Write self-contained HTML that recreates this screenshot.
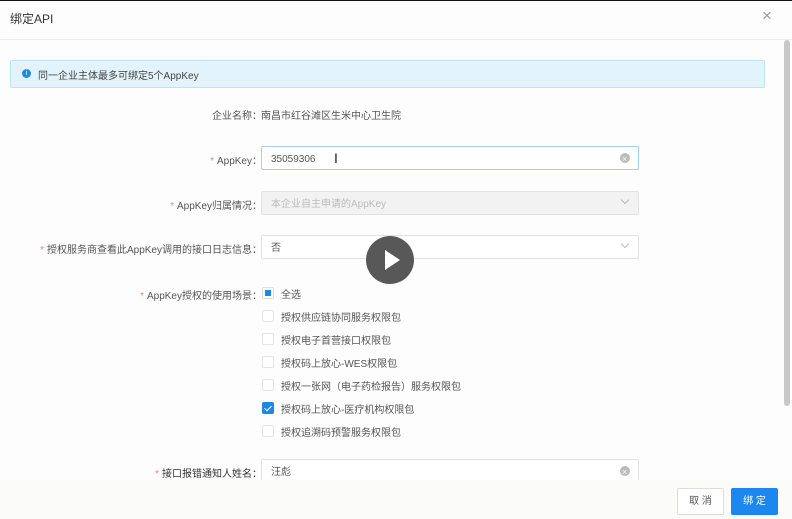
<!DOCTYPE html>
<html><head><meta charset="utf-8"><style>
*{box-sizing:border-box;margin:0;padding:0}
body{width:792px;height:519px;overflow:hidden;background:#fdfdfd;font-family:"Liberation Sans","Noto Sans CJK SC",sans-serif;color:#555;font-size:10px;position:relative}
.abs{position:absolute}
.lbl{position:absolute;right:530px;font-size:10px;color:#555;text-align:right;white-space:nowrap}
.lbl b{color:#f07c7c;font-weight:normal;margin-right:3px}
.inp{position:absolute;left:261px;width:378px;height:24px;border:1px solid #e2e2e2;border-radius:2px;background:#fff;padding-left:9px;line-height:25px;font-size:10px;color:#555}
.cb{position:absolute;left:262px;width:12px;height:12px;border:1px solid #e4e4e4;border-radius:2px;background:#fff}
.ct{position:absolute;left:281px;font-size:10px;color:#555}
.clr{position:absolute;right:8px;top:6px;width:10px;height:10px;border-radius:50%;background:#bbb}
.clr:after{content:"×";position:absolute;left:2px;top:-6px;color:#fff;font-size:9px}
.arr{position:absolute;right:10px;top:5px;width:6px;height:6px;border-right:1px solid #bbb;border-bottom:1px solid #bbb;transform:rotate(45deg)}
</style></head><body>
<div class="abs" style="left:0;top:0;width:792px;height:1px;background:#111"></div>
<div class="abs" style="left:10px;top:10px;font-size:12px;color:#333">绑定API</div>
<div class="abs" style="left:762px;top:6px;font-size:17px;color:#999;font-weight:200">×</div>
<div class="abs" style="left:0;top:39px;width:792px;height:1px;background:#eee"></div>
<div class="abs" style="left:784px;top:40px;width:6px;height:366px;background:#c8c8c8;border-radius:3px"></div>
<div class="abs" style="left:10px;top:60px;width:755px;height:28px;background:#e3f3fb;border:1px solid #bfe3f5;border-radius:2px"></div>
<div class="abs" style="left:22px;top:69px;width:9px;height:9px;border-radius:50%;background:#1d8ce0;color:#fff;font-size:7px;text-align:center;line-height:9px">i</div>
<div class="abs" style="left:38px;top:67px;font-size:10px;color:#444">同一企业主体最多可绑定5个AppKey</div>
<div class="lbl" style="top:107px">企业名称：</div>
<div class="abs" style="left:261px;top:107px;font-size:10px;color:#555">南昌市红谷滩区生米中心卫生院</div>
<div class="lbl" style="top:152px"><b>*</b>AppKey：</div>
<div class="inp" style="top:146px;border-color:#a9cff0">35059306<span class="clr"></span></div>
<div class="abs" style="left:334px;top:150px;font-size:14px;color:#222">I</div>
<div class="lbl" style="top:197px"><b>*</b>AppKey归属情况：</div>
<div class="inp" style="top:191px;background:#f2f2f2;color:#bbb">本企业自主申请的AppKey<span class="arr"></span></div>
<div class="lbl" style="top:241px"><b>*</b>授权服务商查看此AppKey调用的接口日志信息：</div>
<div class="inp" style="top:235px">否<span class="arr"></span></div>
<div class="lbl" style="top:287px"><b>*</b>AppKey授权的使用场景：</div>
<div class="cb" style="top:287px;border-color:#ddd"><div style="position:absolute;left:2px;top:2px;width:6px;height:6px;background:#1d87e4"></div></div>
<div class="ct" style="top:286px">全选</div>
<div class="cb" style="top:310px"></div><div class="ct" style="top:309px">授权供应链协同服务权限包</div>
<div class="cb" style="top:333px"></div><div class="ct" style="top:332px">授权电子首营接口权限包</div>
<div class="cb" style="top:356px"></div><div class="ct" style="top:355px">授权码上放心-WES权限包</div>
<div class="cb" style="top:379px"></div><div class="ct" style="top:378px">授权一张网（电子药检报告）服务权限包</div>
<div class="cb" style="top:402px;background:#1d87e4;border-color:#1d87e4"><div style="position:absolute;left:3px;top:1px;width:4px;height:7px;border-right:1.5px solid #fff;border-bottom:1.5px solid #fff;transform:rotate(45deg)"></div></div><div class="ct" style="top:401px">授权码上放心-医疗机构权限包</div>
<div class="cb" style="top:425px"></div><div class="ct" style="top:424px">授权追溯码预警服务权限包</div>
<div class="lbl" style="top:465px;color:#333"><b>*</b>接口报错通知人姓名：</div>
<div class="inp" style="top:459px">汪彪<span class="clr"></span></div>
<div class="abs" style="left:366px;top:236px;width:48px;height:48px;border-radius:50%;background:#585858"></div>
<div class="abs" style="left:385px;top:250px;width:0;height:0;border-left:15px solid #fff;border-top:10px solid transparent;border-bottom:10px solid transparent"></div>
<div class="abs" style="left:0;top:480px;width:792px;height:39px;background:#fbfbfa"></div>
<div class="abs" style="left:677px;top:488px;width:47px;height:27px;border:1px solid #ddd;border-radius:2px;background:#fff;text-align:center;line-height:25px;font-size:10px;color:#555">取 消</div>
<div class="abs" style="left:731px;top:488px;width:47px;height:27px;border-radius:2px;background:#1d87f0;text-align:center;line-height:27px;font-size:10px;color:#fff">绑 定</div>
</body></html>
